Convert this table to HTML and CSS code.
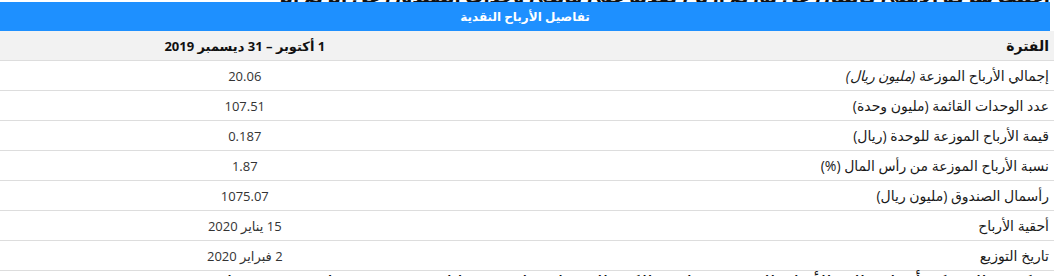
FILE: index.html
```html
<!DOCTYPE html>
<html lang="ar">
<head>
<meta charset="utf-8">
<title>تفاصيل الأرباح النقدية</title>
<link rel="stylesheet" href="styles.css">
</head>
<body>
<p class="lead" dir="rtl">أعلنت شركة الأهلي كابيتال عن توزيع أرباح نقدية على مالكي وحدات الصندوق عن الربع الرابع من العام</p>
<div class="caption" dir="rtl">تفاصيل الأرباح النقدية</div>
<table class="details" dir="rtl">
  <tr class="head">
    <td class="label">الفترة</td>
    <td class="value">1 أكتوبر – 31 ديسمبر 2019</td>
  </tr>
  <tr>
    <td class="label">إجمالي الأرباح الموزعة <em>(مليون ريال)</em></td>
    <td class="value">20.06</td>
  </tr>
  <tr>
    <td class="label">عدد الوحدات القائمة (مليون وحدة)</td>
    <td class="value">107.51</td>
  </tr>
  <tr>
    <td class="label">قيمة الأرباح الموزعة للوحدة (ريال)</td>
    <td class="value">0.187</td>
  </tr>
  <tr>
    <td class="label">نسبة الأرباح الموزعة من رأس المال (%)</td>
    <td class="value">1.87</td>
  </tr>
  <tr>
    <td class="label">رأسمال الصندوق (مليون ريال)</td>
    <td class="value">1075.07</td>
  </tr>
  <tr>
    <td class="label">أحقية الأرباح</td>
    <td class="value">15 يناير 2020</td>
  </tr>
  <tr>
    <td class="label">تاريخ التوزيع</td>
    <td class="value">2 فبراير 2020</td>
  </tr>
</table>
<p class="after" dir="rtl">وذكرت الشركة أن إجمالي الأرباح الموزعة على مالكي الوحدات بلغ قيمتها لعدد 107.51 مليون وحدة قائمة.</p>
</body>
</html>
```
FILE: styles.css
```css
html, body {
  margin: 0;
  padding: 0;
  background: #ffffff;
}

body {
  font-family: "Open Sans", "DejaVu Sans", sans-serif;
  color: #222222;
  overflow: hidden;
}

.lead {
  width: 770px;
  height: 16px;
  margin: -14px 0 0 280px;
  font-size: 18px;
  line-height: 20px;
  font-weight: bold;
  color: #111111;
  text-align: right;
  white-space: nowrap;
  overflow: hidden;
}

.caption {
  width: 1050px;
  height: 29px;
  background: #1e90ff;
  color: #ffffff;
  font-size: 12px;
  font-weight: bold;
  line-height: 29px;
  text-align: center;
}

.details {
  width: 1054px;
  border-collapse: collapse;
  margin: 0;
}

.details td {
  height: 29px;
  padding: 0;
  border-bottom: 1px solid #dddddd;
  vertical-align: middle;
}

.details .head td {
  background: #f2f2f2;
  font-weight: bold;
  color: #111111;
}

.details .label {
  width: 560px;
  padding-right: 5px;
  text-align: right;
  font-size: 14px;
  color: #1a1a1a;
}

.details .value {
  width: 490px;
  text-align: center;
  font-size: 13px;
  color: #333333;
}

.details em {
  font-style: italic;
}

.after {
  width: 1050px;
  margin: 1px 0 0;
  font-size: 20px;
  line-height: 22px;
  color: #111111;
  text-align: right;
  white-space: nowrap;
}
```
